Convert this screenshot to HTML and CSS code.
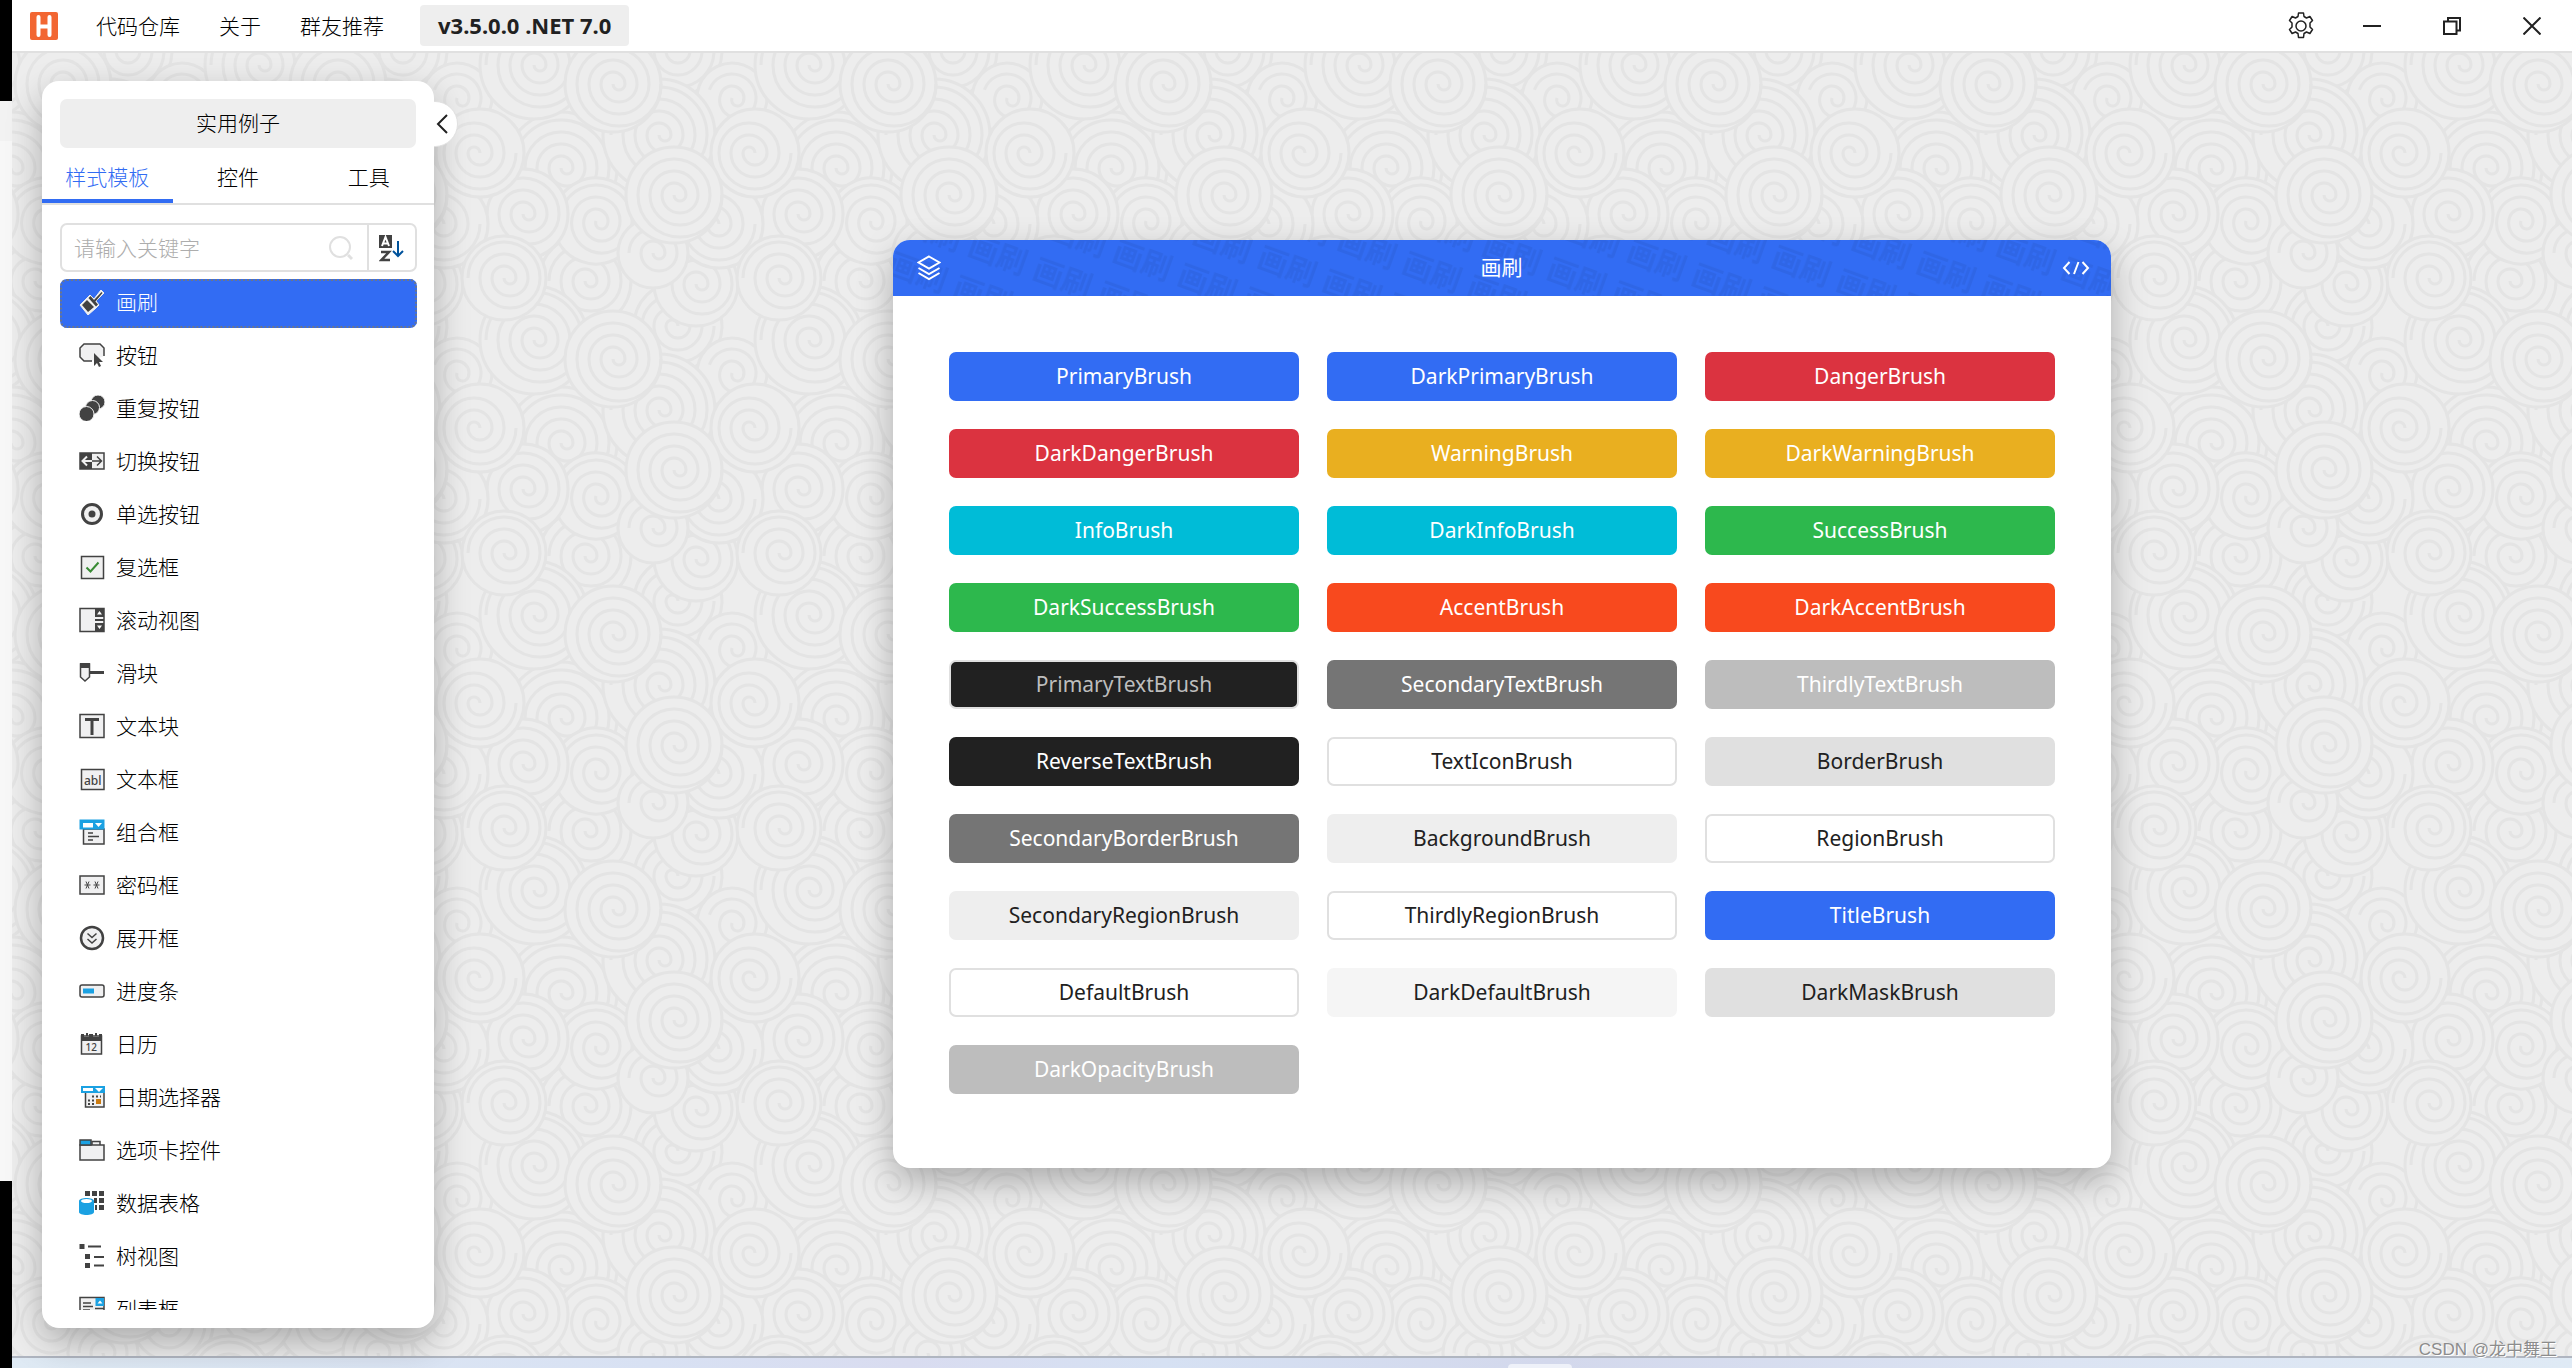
FILE: index.html
```
<!DOCTYPE html>
<html lang="zh-CN">
<head>
<meta charset="utf-8">
<title>HandyControl</title>
<link rel="stylesheet" href="styles.css">
</head>
<body>
<div class="screen-edge"></div>
<div class="window">
  <header class="titlebar">
    <svg class="logo" viewBox="0 0 28 28"><rect width="28" height="28" rx="2" fill="#f26632"/><path d="M8.500 5v18M19.500 5v18M8.500 14.500h11" stroke="#fff" stroke-width="4" stroke-linecap="round" fill="none"/></svg>
    <nav class="menu">
      <a href="#repo">代码仓库</a>
      <a href="#about">关于</a>
      <a href="#friends">群友推荐</a>
    </nav>
    <span class="version">v3.5.0.0 .NET 7.0</span>
    <div class="window-buttons">
      <button aria-label="设置"><svg width="28" height="28" viewBox="0 0 28 28" class="line"><circle cx="14" cy="14" r="5"/><path d="M11 4.500 11.500 1h5l.5 3.500 2.500 1.500 3.400-1.500 2.600 4-2.500 2.500v4l2.500 2.500-2.600 4-3.400-1.500-2.500 1.500-.5 4h-5l-.5-4-2.500-1.500-3.400 1.500-2.600-4 2.500-2.500v-4l-2.500-2.500 2.600-4 3.400 1.500z" stroke-linejoin="round"/></svg></button>
      <button aria-label="最小化"><svg width="18" height="18" viewBox="0 0 18 18" class="line"><path d="M0 9h18" stroke-width="2"/></svg></button>
      <button aria-label="还原"><svg width="18" height="18" viewBox="0 0 18 18" class="line"><path d="M1 4.500h12.500V17H1zM5 4V1h12v12.500h-3" stroke-width="2"/></svg></button>
      <button aria-label="关闭"><svg width="18" height="18" viewBox="0 0 18 18" class="line"><path d="M.5.5l17 17M17.500.5l-17 17" stroke-width="2"/></svg></button>
    </div>
  </header>

  <main class="workspace">
    <svg class="swirls" aria-hidden="true">
      <defs><pattern id="swirl" width="275" height="275" patternUnits="userSpaceOnUse"></pattern></defs>
      <rect width="100%" height="100%" fill="url(#swirl)"/>
    </svg>

    <aside class="sidebar">
      <button class="collapse" aria-label="收起"><svg width="12" height="20" viewBox="0 0 12 20" class="line"><path d="M11 1 2 10l9 9" stroke-width="2"/></svg></button>
      <div class="panel">
        <button class="practical">实用例子</button>
        <div class="tabs" role="tablist">
          <button role="tab" aria-selected="true" class="tab active">样式模板</button>
          <button role="tab" aria-selected="false" class="tab">控件</button>
          <button role="tab" aria-selected="false" class="tab">工具</button>
        </div>
        <div class="search">
          <input type="text" aria-label="搜索" placeholder="请输入关键字">
          <svg class="search-icon" width="26" height="26" viewBox="0 0 26 26" fill="none" stroke="#e0e0e0" stroke-width="2"><circle cx="12" cy="12" r="10"/><path d="M20 20l4 4" stroke-width="3"/></svg>
          <button class="sort" aria-label="排序">
            <svg width="26" height="28" viewBox="0 0 26 28"><path fill="#424242" d="M0 1h13v13H0z"/><path d="M3 12 6.500 3 10 12M4.500 9.500h4" stroke="#fff" stroke-width="2" fill="none"/><path d="M2 18h8L2.500 26H11" stroke="#424242" stroke-width="2.500" fill="none"/><path d="M19 7v15M14 17l5 5 5-5" stroke="#00539c" stroke-width="2" fill="none"/></svg>
          </button>
        </div>
        <ul class="list">
          <li><button class="item selected"><svg viewBox="0 0 26 26"><path d="M1 16 9 8l2-2 4 4 7-9 3 3-8 8 3 4-3 3-8 7z" fill="#f0f0f0" stroke="#f0f0f0"/><path d="M3 16l5-5 7 7-6 5zM9.500 9l2-2 7.500 8.500-2 2zM15 11l7.500-8 1 1-7 8.500z" fill="#424242"/></svg>画刷</button></li>
          <li><button class="item"><svg viewBox="0 0 26 26"><path d="M13 19H5l-4-4V6l4-4h16l4 4v8" fill="#f0f0f1" stroke="#424242" stroke-width="1.500"/><path d="M15 11v13l3-3 2 4 2-1-2-4h4z" fill="#424242"/></svg>按钮</button></li>
          <li><button class="item"><svg viewBox="0 0 26 26" fill="#424242" stroke="#f3f3f3"><circle cx="19" cy="7" r="7"/><circle cx="13.500" cy="12.500" r="7"/><circle cx="7.500" cy="19" r="7.500"/></svg>重复按钮</button></li>
          <li><button class="item"><svg viewBox="0 0 26 26" fill="none"><path d="M1 5h24v16H1z" fill="#f0f0f0" stroke="#424242" stroke-width="1.500"/><path d="M1 5h12v16H1z" fill="#424242"/><path d="M13 13H3.500M8 8.500 3.500 13 8 17.500" stroke="#f0f0f0" stroke-width="2"/><path d="M13 13h9.500M18 8.500l4.500 4.500-4.500 4.500" stroke="#424242" stroke-width="1.500"/></svg>切换按钮</button></li>
          <li><button class="item"><svg viewBox="0 0 26 26"><circle cx="13" cy="13" r="9.500" fill="#f0f0f0" stroke="#424242" stroke-width="3"/><circle cx="13" cy="13" r="3.500" fill="#424242"/></svg>单选按钮</button></li>
          <li><button class="item"><svg viewBox="0 0 26 26"><path d="M2.500 2.500h22v22h-22z" fill="#f0f0f0" stroke="#424242" stroke-width="1.500"/><path d="M7.500 13.500l4 4 8-9" fill="none" stroke="#388a34" stroke-width="2"/></svg>复选框</button></li>
          <li><button class="item"><svg viewBox="0 0 26 26"><path d="M1 1.500h24v23H1z" fill="#f0f0f1" stroke="#424242" stroke-width="1.500"/><path d="M16 1h9v9h-9zM16 12h9v2h-9zM16 16h9v9h-9z" fill="#424242"/><path d="M18 7.500h5L20.500 4zM18 18.500h5L20.500 22z" fill="#fff"/></svg>滚动视图</button></li>
          <li><button class="item"><svg viewBox="0 0 26 26"><path d="M1.500 4h9v13L6 21l-4.500-4z" fill="#f0f0f1" stroke="#424242" stroke-width="1.500"/><path d="M1 3h10v5H1zM10 11h15v3H10z" fill="#424242"/></svg>滑块</button></li>
          <li><button class="item"><svg viewBox="0 0 26 26"><path d="M1 1.500h24v23H1z" fill="#f0f0f1" stroke="#424242" stroke-width="1.500"/><path d="M6 5h14v3h-5.500v14h-3V8H6z" fill="#424242"/></svg>文本块</button></li>
          <li><button class="item"><svg viewBox="0 0 26 26"><path d="M2.500 3.500H25v20H2.500z" fill="#f0f0f1" stroke="#424242" stroke-width="1.500"/><text x="5" y="19" font-size="12" font-weight="500" fill="#424242">abl</text></svg>文本框</button></li>
          <li><button class="item"><svg viewBox="0 0 26 26"><path d="M4.500 10H25v15H4.500z" fill="#f0f0f1" stroke="#424242" stroke-width="1.500"/><path d="M.5.500h25v10H.5z" fill="#1ba1e2"/><path d="M4 4h10v4.500H4zM16 4h7l-3.500 4z" fill="#fff"/><path d="M9 14h5M9 17.500h11M9 21h5" stroke="#424242" stroke-width="1.500"/></svg>组合框</button></li>
          <li><button class="item"><svg viewBox="0 0 26 26"><path d="M1 4h24v18H1z" fill="#f0f0f1" stroke="#424242" stroke-width="1.500"/><path d="M5.500 13h6M7 9.500l3 7M10 9.500l-3 7M14.500 13h6M16 9.500l3 7M19 9.500l-3 7" stroke="#424242"/></svg>密码框</button></li>
          <li><button class="item"><svg viewBox="0 0 26 26"><circle cx="13" cy="13" r="11" fill="#f0f0f1" stroke="#424242" stroke-width="2.500"/><path d="M8.500 8.500l4.500 4 4.500-4M8.500 14l4.500 4 4.500-4" fill="none" stroke="#424242" stroke-width="1.500"/></svg>展开框</button></li>
          <li><button class="item"><svg viewBox="0 0 26 26"><rect x="1" y="7" width="24" height="12" rx="2" fill="#f0f0f1" stroke="#424242" stroke-width="1.500"/><path d="M4 10.500h11v5H4z" fill="#1ba1e2"/></svg>进度条</button></li>
          <li><button class="item"><svg viewBox="0 0 26 26"><path d="M2.500 5h20v18h-20z" fill="#f0f0f1" stroke="#424242" stroke-width="1.500"/><path d="M2 3h3v3h5V3h4v3h6V3h3v7H2zM7 2h2v3H7zM16 2h2v3h-2z" fill="#424242"/><text x="6.500" y="20" font-size="10" font-weight="500" fill="#424242">12</text></svg>日历</button></li>
          <li><button class="item"><svg viewBox="0 0 26 26"><path d="M6.500 8H25v15H6.500z" fill="#f0f0f1" stroke="#424242" stroke-width="1.500"/><path d="M2 2h24v7H2z" fill="#1ba1e2"/><path d="M4 4h10v3H4zM16 4h8l-4 4z" fill="#fff"/><path d="M13 12.500h9M9 16.500h6M9 20h6" stroke="#424242" stroke-width="2" stroke-dasharray="2 2"/><path d="M17 15h5v5h-5z" fill="#ca7a10"/></svg>日期选择器</button></li>
          <li><button class="item"><svg viewBox="0 0 26 26"><path d="M1 8h24v15H1zM13 4.500h8V8h-8z" fill="#f0f0f1" stroke="#424242" stroke-width="1.500"/><path d="M1 3h11v5H1z" fill="#1ba1e2" stroke="#424242" stroke-width="1.500"/></svg>选项卡控件</button></li>
          <li><button class="item"><svg viewBox="0 0 26 26"><path d="M6 1h5v5H6zM13 1h5v5h-5zM20 1h5v5h-5zM15 8h3v5h-3zM20 8h5v5h-5zM16 15h2v5h-2zM20 15h5v5h-5z" fill="#424242"/><path d="M0 11v11c0 4 15 4 15 0V11c0-4-15-4-15 0z" fill="#1ba1e2"/><ellipse cx="7.500" cy="11" rx="5.500" ry="2" fill="#fff"/></svg>数据表格</button></li>
          <li><button class="item"><svg viewBox="0 0 26 26"><path d="M.5 1h5v5h-5zM6 11h5v5H6zM6 20h5v5H6zM9 2.500h13v2H9zM15 13h10v2H15zM15 21.500h10v2H15z" fill="#424242"/></svg>树视图</button></li>
          <li><button class="item"><svg viewBox="0 0 26 26"><path d="M1 1.500h24v22H1z" fill="#f0f0f1" stroke="#424242" stroke-width="1.500"/><path d="M4 7h8M4 10.500h10M4 14h7M16 12.500h9" stroke="#424242" stroke-width="1.500"/><path d="M16.500 2H25v8h-8.500z" fill="#1ba1e2"/><path d="M18.500 7.500h5L21 4.500z" fill="#fff"/></svg>列表框</button></li>
        </ul>
      </div>
    </aside>

    <section class="stage">
      <article class="card">
        <header class="card-head">
          <svg class="card-stamp" aria-hidden="true">
            <defs><pattern id="stamp" width="69" height="44" patternUnits="userSpaceOnUse" patternTransform="translate(105 14) rotate(20) translate(-34 -22)"><text x="4" y="33" font-size="30" font-weight="700" fill="#2f66e6">画刷</text></pattern></defs>
            <rect width="100%" height="100%" fill="url(#stamp)"/>
          </svg>
          <svg class="head-icon" width="24" height="26" viewBox="0 0 24 26"><path d="M12 1.500 22.500 7.500 12 13.500 1.500 7.500zM1.500 13 12 19l10.500-6M1.500 18 12 24l10.500-6"/></svg>
          <h1>画刷</h1>
          <button class="code" aria-label="代码"><svg class="head-icon" width="28" height="14" viewBox="0 0 28 14"><path d="M7.500 1 2 7l5.500 6M16.500 1l-4.500 12M20.500 1 26 7l-5.500 6"/></svg></button>
        </header>
        <div class="brushes">
          <button class="brush primary">PrimaryBrush</button>
          <button class="brush primary">DarkPrimaryBrush</button>
          <button class="brush danger">DangerBrush</button>
          <button class="brush danger">DarkDangerBrush</button>
          <button class="brush warning">WarningBrush</button>
          <button class="brush warning">DarkWarningBrush</button>
          <button class="brush info">InfoBrush</button>
          <button class="brush info">DarkInfoBrush</button>
          <button class="brush success">SuccessBrush</button>
          <button class="brush success">DarkSuccessBrush</button>
          <button class="brush accent">AccentBrush</button>
          <button class="brush accent">DarkAccentBrush</button>
          <button class="brush primary-text">PrimaryTextBrush</button>
          <button class="brush gray">SecondaryTextBrush</button>
          <button class="brush silver">ThirdlyTextBrush</button>
          <button class="brush black">ReverseTextBrush</button>
          <button class="brush outline">TextIconBrush</button>
          <button class="brush border">BorderBrush</button>
          <button class="brush gray">SecondaryBorderBrush</button>
          <button class="brush light">BackgroundBrush</button>
          <button class="brush outline">RegionBrush</button>
          <button class="brush light">SecondaryRegionBrush</button>
          <button class="brush outline">ThirdlyRegionBrush</button>
          <button class="brush primary">TitleBrush</button>
          <button class="brush outline">DefaultBrush</button>
          <button class="brush pale">DarkDefaultBrush</button>
          <button class="brush border">DarkMaskBrush</button>
          <button class="brush silver">DarkOpacityBrush</button>
        </div>
      </article>
    </section>
  </main>
  <footer class="taskbar"><span class="taskbar-tab"></span></footer>
</div>
<div class="credit">CSDN @龙中舞王</div>
<script src="script.js"></script>
</body>
</html>
```
FILE: styles.css
```
* { box-sizing: border-box; }

body {
  margin: 0;
  height: 100vh;
  display: flex;
  overflow: hidden;
  font-family: "Noto Sans", "Noto Sans CJK SC", sans-serif;
  font-size: 21px;
  line-height: 28px;
  color: #212121;
  background: #fff;
}

button {
  font: inherit;
  color: inherit;
  border: 0;
  padding: 0;
  background: none;
}

.line { fill: none; stroke: #212121; stroke-width: 1.5; }

.screen-edge {
  flex: 0 0 12px;
  background: linear-gradient(#000 0 101px, #f2f2f2 101px 141px, #f7f7f7 141px 1181px, #000 1181px);
}

.window {
  flex: 1;
  min-width: 0;
  display: flex;
  flex-direction: column;
}

.titlebar {
  flex: 0 0 53px;
  display: flex;
  align-items: center;
  padding-left: 18px;
  border-bottom: 2px solid #e0e0e0;
}
.logo { width: 28px; height: 28px; }
.menu {
  display: flex;
  gap: 39px;
  padding: 0 36px 0 38px;
  font-weight: 300;
  color: #000;
}
.menu a { color: inherit; text-decoration: none; }
.version {
  padding: 0 18px;
  line-height: 41px;
  font-size: 22px;
  font-weight: 700;
  background: #eee;
  border-radius: 4px;
}
.window-buttons { margin-left: auto; display: flex; }
.window-buttons button {
  width: 80px;
  height: 51px;
  display: flex;
  align-items: center;
  justify-content: center;
}
.window-buttons button:first-child { width: 62px; }

.workspace {
  position: relative;
  flex: 1;
  min-height: 0;
  display: flex;
  background: #ededed;
}
.swirls { position: absolute; inset: 0; width: 100%; height: 100%; }

.sidebar {
  position: relative;
  flex: 0 0 392px;
  min-width: 0;
  margin: 28px 0 28px 30px;
  font-weight: 300;
  color: #000;
}
.panel {
  position: relative;
  height: 100%;
  display: flex;
  flex-direction: column;
  padding: 18px 0;
  background: #fff;
  border-radius: 17px;
  box-shadow: 0 14px 35px rgba(0, 0, 0, .28);
}
.collapse {
  position: absolute;
  top: 20px;
  right: -24px;
  width: 46px;
  height: 46px;
  border-radius: 50%;
  background: #fff;
  border: 1px solid #e0e0e0;
  z-index: 1;
  clip-path: inset(0 0 0 22px);
  display: flex;
  align-items: center;
  justify-content: flex-end;
  padding-right: 9px;
}
.practical {
  height: 49px;
  flex: none;
  margin: 0 18px;
  padding-bottom: 2px;
  background: #eee;
  border-radius: 7px;
}
.tabs { display: flex; border-bottom: 2px solid #e0e0e0; }
.tab {
  flex: 1;
  height: 55px;
  padding-top: 6px;
  border-bottom: 4px solid transparent;
}
.tab.active { color: #326cf3; border-bottom-color: #326cf3; }

.search {
  display: flex;
  align-items: center;
  flex: 0 0 49px;
  margin: 18px 17px 7px 18px;
  border: 2px solid #e0e0e0;
  border-radius: 7px;
}
.search input {
  flex: 1;
  width: 0;
  min-width: 0;
  padding: 0 0 0 12px;
  border: 0;
  outline: 0;
  background: none;
  font: inherit;
}
.search input::placeholder { color: #adadad; }
.search-icon { margin-right: 13px; }
.sort {
  align-self: stretch;
  width: 48px;
  display: flex;
  align-items: center;
  justify-content: center;
  border-left: 2px solid #e0e0e0;
}

.list {
  flex: 1;
  min-height: 0;
  overflow: hidden;
  margin: 0 17px 0 18px;
  padding: 0;
  list-style: none;
}
.item {
  width: 100%;
  height: 49px;
  padding: 0 0 3px 19px;
  display: flex;
  align-items: center;
  gap: 11px;
  border-radius: 7px;
}
.list li { height: 53px; }
.item svg { width: 26px; height: 26px; }
.item.selected {
  color: #fff;
  background: #326cf3;
  outline: 2px dotted #6c7689;
  outline-offset: -2px;
}

.stage {
  position: relative;
  flex: 1;
  display: flex;
  align-items: center;
  justify-content: center;
  padding: 0 2px 2px 0;
}
.card {
  width: 1218px;
  max-width: 94%;
  background: #fff;
  border-radius: 17px;
  box-shadow: 0 14px 35px rgba(0, 0, 0, .28);
}
.card-head {
  position: relative;
  height: 56px;
  padding: 0 21px 0 24px;
  display: flex;
  align-items: center;
  justify-content: space-between;
  color: #fff;
  background: #326cf3;
  border-radius: 17px 17px 0 0;
  overflow: hidden;
}
.card-stamp { position: absolute; inset: 0; width: 100%; height: 100%; }
.card-head h1 { position: relative; margin: 0 0 2px; font-size: 21px; font-weight: 400; }
.head-icon { position: relative; display: block; fill: none; stroke: #fff; stroke-width: 2; }

.brushes {
  display: grid;
  grid-template-columns: repeat(3, 1fr);
  gap: 28px;
  padding: 56px 56px 74px;
}
.brush { height: 49px; border-radius: 7px; color: #fff; }
.primary { background: #326cf3; }
.danger { background: #db3340; }
.warning { background: #e9af20; }
.info { background: #00bcd7; }
.success { background: #2db84d; }
.accent { background: #f8491e; }
.primary-text { background: #212121; color: #bdbdbd; border: 2px solid #e0e0e0; }
.gray { background: #757575; }
.silver { background: #bdbdbd; }
.black { background: #212121; }
.outline { background: #fff; color: #212121; border: 2px solid #e0e0e0; }
.border { background: #e0e0e0; color: #212121; }
.light { background: #eee; color: #212121; }
.pale { background: #f5f5f5; color: #212121; }

.taskbar {
  flex: 0 0 12px;
  display: flex;
  justify-content: center;
  align-items: flex-end;
  padding-left: 496px;
  border-top: 2px solid #b0b6c1;
  background: linear-gradient(90deg, #dfeaf4, #d8e1f3 25%, #d9dcf0 35%, #d6e1f3 45%, #d3d8ec 60%, #dce4f3 80%, #dfeaf5);
}
.taskbar-tab { width: 64px; height: 4px; background: #eef1f9; border-radius: 4px 4px 0 0; }

.credit {
  position: absolute;
  right: 15px;
  bottom: 4px;
  font: 17px/28px "Liberation Sans", "Noto Sans CJK SC", sans-serif;
  color: #8c8c8c;
  text-shadow: 1px 1px 0 #fff;
}
```
FILE: script.js
```
// Fills the workspace pattern with overlapping spirals, wrapped at the tile edges.
const TILE = 275;
const NS = "http://www.w3.org/2000/svg";

// x, y, radius, rotation; later spirals cover earlier ones
const spirals = [
  [116, 273, 44, 180], [170, 45, 35, 20], [23, 228, 46, 0], [274, 115, 56, 0],
  [97, 82, 56, 0], [247, 12, 54, 0], [134, 231, 42, 0], [34, 168, 43, 20],
  [236, 161, 45, 0], [157, 171, 44, 180], [91, 200, 35, 0], [51, 31, 48, 0],
  [193, 100, 44, 180], [217, 225, 42, 0], [112, 142, 48, 0]
];

function spiralPath(radius) {
  let d = "M0 0";
  let sign = 1;
  for (let r = 6; r <= radius - 6; r += 6) {
    d += ` a${r} ${r} 0 0 0 ${sign * r * 2} 0`;
    sign = -sign;
  }
  return d;
}

const pattern = document.getElementById("swirl");
for (const [x, y, radius, angle] of spirals) {
  for (const dx of [-TILE, 0, TILE]) {
    for (const dy of [-TILE, 0, TILE]) {
      const g = document.createElementNS(NS, "g");
      g.setAttribute("transform", `translate(${x + dx} ${y + dy}) rotate(${angle})`);
      g.setAttribute("stroke", "#e4e4e4");
      g.setAttribute("stroke-width", "3");
      const disc = document.createElementNS(NS, "circle");
      disc.setAttribute("r", radius);
      disc.setAttribute("fill", "#ededed");
      const line = document.createElementNS(NS, "path");
      line.setAttribute("d", spiralPath(radius));
      line.setAttribute("fill", "none");
      g.append(disc, line);
      pattern.append(g);
    }
  }
}
```
